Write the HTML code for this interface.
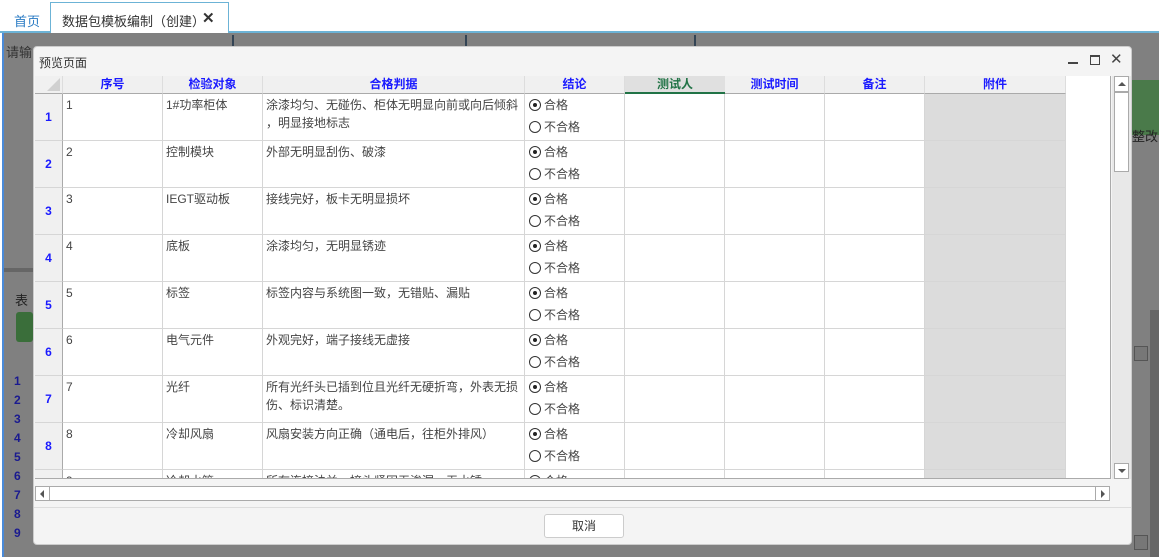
<!DOCTYPE html>
<html><head><meta charset="utf-8"><style>
*{margin:0;padding:0;box-sizing:border-box}
body{width:1159px;height:557px;overflow:hidden;background:#fff;font-family:"Liberation Sans","Noto Sans CJK SC",sans-serif;font-size:12px;color:#333;position:relative}
.a{position:absolute}
.ov{left:4px;top:33px;width:1155px;height:524px;background:#808080}
.dlg{left:33px;top:46px;width:1099px;height:499px;background:#f4f4f4;border-radius:4px;border:1px solid #ccc}
.hd{background:#f0f0f0;color:#1a1aff;font-weight:bold;text-align:center;line-height:17px;font-size:12px}
.cell{border-right:1px solid #d6d6d6;border-bottom:1px solid #d6d6d6;background:#fff;padding:2px 3px;line-height:18px;color:#444}
.rn{background:#f0f0f0;color:#1a1aff;font-weight:bold;text-align:center;border-bottom:1px solid #d6d6d6;border-right:1px solid #aaa;font-size:12px}
.rad{display:inline-block;width:12px;height:12px;border:1px solid #333;border-radius:50%;vertical-align:-2px;margin-right:3px;position:relative}
.rad.on:after{content:"";position:absolute;left:3px;top:3px;width:4px;height:4px;border-radius:50%;background:#222}
</style></head><body>
<div class="a" style="left:0;top:0;width:1159px;height:33px;background:#fff;border-bottom:2px solid #6cb3d6"></div>
<div class="a" style="left:14px;top:11px;color:#2a7bc4;font-size:13px">首页</div>
<div class="a" style="left:50px;top:2px;width:179px;height:31px;border:1px solid #6cb3d6;border-bottom:none;background:#fff"></div>
<div class="a" style="left:62px;top:11px;font-size:13px;color:#333">数据包模板编制（创建）</div>
<div class="a" style="left:202px;top:9px;font-size:15px;font-weight:bold;color:#333">✕</div>
<div class="a" style="left:2px;top:33px;width:2px;height:524px;background:#4a8ad8"></div>
<div class="a ov"></div>
<div class="a" style="left:6px;top:42px;color:#333;font-size:13px">请输</div>
<div class="a" style="left:232px;top:35px;width:2px;height:12px;background:#345"></div>
<div class="a" style="left:465px;top:35px;width:2px;height:12px;background:#345"></div>
<div class="a" style="left:694px;top:35px;width:2px;height:12px;background:#345"></div>
<div class="a" style="left:1132px;top:80px;width:27px;height:55px;background:#4a7a4a"></div>
<div class="a" style="left:1132px;top:126px;font-size:13px;color:#222">整改</div>
<div class="a" style="left:4px;top:268px;width:30px;height:4px;background:#666"></div>
<div class="a" style="left:16px;top:312px;width:17px;height:30px;background:#3a6e3a;border-radius:3px"></div>
<div class="a" style="left:15px;top:290px;color:#222;font-size:13px">表</div>
<div class="a" style="left:14px;top:372px;color:#1a1a90;font-weight:bold;line-height:19px;font-size:12px">1<br>2<br>3<br>4<br>5<br>6<br>7<br>8<br>9</div>
<div class="a" style="left:1134px;top:346px;width:14px;height:15px;background:#777;border:1px solid #555"></div>
<div class="a" style="left:1134px;top:535px;width:14px;height:15px;background:#777;border:1px solid #555"></div>
<div class="a" style="left:1150px;top:310px;width:9px;height:247px;background:#666"></div>
<div class="a dlg"></div>
<div class="a" style="left:39px;top:54px;font-size:12px;color:#333">预览页面</div>
<div class="a" style="left:1068px;top:62px;width:10px;height:2px;background:#444"></div>
<div class="a" style="left:1090px;top:55px;width:10px;height:10px;border:1px solid #444;border-top-width:2px"></div>
<div class="a" style="left:1110px;top:50px;font-size:15px;color:#444">✕</div>
<div class="a" style="left:35px;top:76px;width:1076px;height:403px;background:#fff;overflow:hidden;border-bottom:1px solid #aaa">
<div class="a hd" style="left:0;top:0;width:28px;height:18px;border-bottom:1px solid #aaa;border-right:1px solid #ddd"><div class="a" style="right:2px;bottom:2px;width:0;height:0;border-left:13px solid transparent;border-bottom:13px solid #d0d0d0"></div></div>
<div class="a hd" style="left:28px;top:0;width:100px;height:18px;border-bottom:1px solid #aaa;border-right:1px solid #ddd">序号</div>
<div class="a hd" style="left:128px;top:0;width:100px;height:18px;border-bottom:1px solid #aaa;border-right:1px solid #ddd">检验对象</div>
<div class="a hd" style="left:228px;top:0;width:262px;height:18px;border-bottom:1px solid #aaa;border-right:1px solid #ddd">合格判据</div>
<div class="a hd" style="left:490px;top:0;width:100px;height:18px;border-bottom:1px solid #aaa;border-right:1px solid #ddd">结论</div>
<div class="a hd" style="left:590px;top:0;width:100px;height:18px;border-bottom:2px solid #217346;background:#e0e0e0;color:#217346">测试人</div>
<div class="a hd" style="left:690px;top:0;width:100px;height:18px;border-bottom:1px solid #aaa;border-right:1px solid #ddd">测试时间</div>
<div class="a hd" style="left:790px;top:0;width:100px;height:18px;border-bottom:1px solid #aaa;border-right:1px solid #ddd">备注</div>
<div class="a hd" style="left:890px;top:0;width:141px;height:18px;border-bottom:1px solid #aaa;border-right:1px solid #ddd">附件</div>
<div class="a" style="left:1075px;top:0;width:1px;height:403px;background:#aaa"></div>
<div id="rows"></div>
</div>
<script>
var d=[["1","1#功率柜体","涂漆均匀、无碰伤、柜体无明显向前或向后倾斜<br>，明显接地标志"],["2","控制模块","外部无明显刮伤、破漆"],["3","IEGT驱动板","接线完好，板卡无明显损坏"],["4","底板","涂漆均匀，无明显锈迹"],["5","标签","标签内容与系统图一致，无错贴、漏贴"],["6","电气元件","外观完好，端子接线无虚接"],["7","光纤","所有光纤头已插到位且光纤无硬折弯，外表无损<br>伤、标识清楚。"],["8","冷却风扇","风扇安装方向正确（通电后，往柜外排风）"],["9","冷却水管","所有连接法兰、接头紧固无渗漏，无水锈"]];
var h="";
d.forEach(function(r,i){var t=18+i*47;
h+='<div class="a rn" style="left:0;top:'+t+'px;width:28px;height:47px;line-height:47px">'+r[0]+'</div>';
h+='<div class="a cell" style="left:28px;top:'+t+'px;width:100px;height:47px">'+r[0]+'</div>';
h+='<div class="a cell" style="left:128px;top:'+t+'px;width:100px;height:47px">'+r[1]+'</div>';
h+='<div class="a cell" style="left:228px;top:'+t+'px;width:262px;height:47px;font-size:12px">'+r[2]+'</div>';
h+='<div class="a cell" style="left:490px;top:'+t+'px;width:100px;height:47px;line-height:22px;padding:0 4px"><span class="rad on"></span>合格<br><span class="rad"></span>不合格</div>';
h+='<div class="a cell" style="left:590px;top:'+t+'px;width:100px;height:47px"></div>';
h+='<div class="a cell" style="left:690px;top:'+t+'px;width:100px;height:47px"></div>';
h+='<div class="a cell" style="left:790px;top:'+t+'px;width:100px;height:47px"></div>';
h+='<div class="a cell" style="left:890px;top:'+t+'px;width:141px;height:47px;background:#dcdcdc"></div>';
});
document.getElementById("rows").innerHTML=h;
</script>
<div class="a" style="left:1112px;top:76px;width:19px;height:403px;background:#e8e8e8"></div>
<div class="a" style="left:1114px;top:76px;width:15px;height:16px;background:#fff;border:1px solid #aaa"><div class="a" style="left:3px;top:5px;border-left:4px solid transparent;border-right:4px solid transparent;border-bottom:4px solid #555"></div></div>
<div class="a" style="left:1114px;top:92px;width:15px;height:80px;background:#fff;border:1px solid #aaa"></div>
<div class="a" style="left:1114px;top:463px;width:15px;height:16px;background:#fff;border:1px solid #aaa"><div class="a" style="left:3px;top:5px;border-left:4px solid transparent;border-right:4px solid transparent;border-top:4px solid #555"></div></div>
<div class="a" style="left:35px;top:486px;width:1075px;height:15px;background:#fff;border:1px solid #aaa"></div>
<div class="a" style="left:35px;top:486px;width:15px;height:15px;border:1px solid #aaa;background:#fff"><div class="a" style="left:4px;top:3px;border-top:4px solid transparent;border-bottom:4px solid transparent;border-right:4px solid #555"></div></div>
<div class="a" style="left:1095px;top:486px;width:15px;height:15px;border:1px solid #aaa;background:#fff"><div class="a" style="left:5px;top:3px;border-top:4px solid transparent;border-bottom:4px solid transparent;border-left:4px solid #555"></div></div>
<div class="a" style="left:34px;top:507px;width:1097px;height:1px;background:#ddd"></div>
<div class="a" style="left:544px;top:514px;width:80px;height:24px;background:#fff;border:1px solid #ccc;border-radius:3px;text-align:center;line-height:22px;color:#333">取消</div>
</body></html>
